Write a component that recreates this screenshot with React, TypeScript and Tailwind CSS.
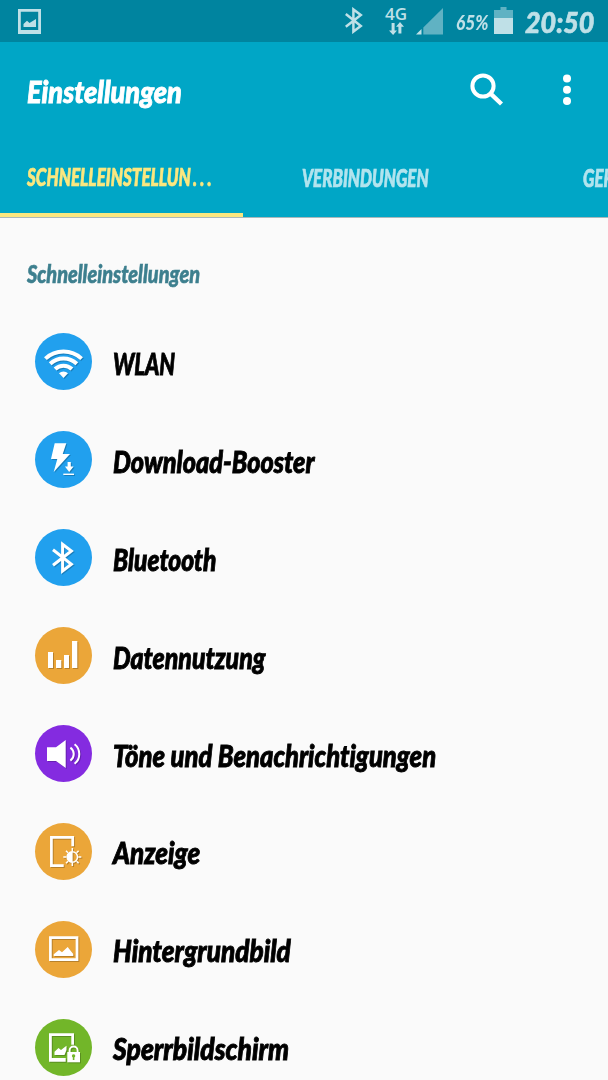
import type { ReactNode } from "react";

type SettingsItem = {
  label: string;
  color: string;
  stretch: string;
  icon: ReactNode;
};

const ITEMS: SettingsItem[] = [
  {
    label: "WLAN",
    color: "bg-[#21a0ee]",
    stretch: "scale-x-[0.73]",
    icon: (
      <>
        <g fill="none" stroke="currentColor" strokeWidth="4">
          <path d="M10.4 25.6A26.5 26.5 0 0 1 46.6 25.6" />
          <path d="M15.2 30.7A19.5 19.5 0 0 1 41.8 30.7" />
          <path d="M20.1 36A12.3 12.3 0 0 1 36.9 36" />
        </g>
        <path d="M28.5 45L24 40.2A6.5 6.5 0 0 1 33 40.2Z" />
      </>
    ),
  },
  {
    label: "Download-Booster",
    color: "bg-[#21a0ee]",
    stretch: "scale-x-[0.842]",
    icon: (
      <>
        <path d="M19.7 12.3H31.3L27.7 23H35L18.7 41L22.3 28H16Z" />
        <path d="M32.6 31H35.8V35.5H38.6L34.2 41L29.9 35.5H32.6Z" />
        <path d="M28.3 42.6H39V44H28.3Z" />
      </>
    ),
  },
  {
    label: "Bluetooth",
    color: "bg-[#21a0ee]",
    stretch: "scale-x-[0.82]",
    icon: (
      <path
        d="M18 20.8L36.4 35.2L27.6 42V15.2L36.4 22L18 36.2"
        fill="none"
        stroke="currentColor"
        strokeWidth="3"
      />
    ),
  },
  {
    label: "Datennutzung",
    color: "bg-[#eba639]",
    stretch: "scale-x-[0.83]",
    icon: <path d="M13 25H18V41H13ZM21 33H26.3V41H21ZM29 28H34V41H29ZM37 14H42.3V41H37Z" />,
  },
  {
    label: "Töne und Benachrichtigungen",
    color: "bg-[#842be0]",
    stretch: "scale-x-[0.853]",
    icon: (
      <>
        <path d="M12 22.3H21L30.7 15V43L21 36H12Z" />
        <g fill="none" stroke="currentColor" strokeWidth="2">
          <path d="M35.4 22.6A8 8 0 0 1 35.4 35.6" />
          <path d="M39.6 19.2A12.6 12.6 0 0 1 39.6 38.8" />
        </g>
      </>
    ),
  },
  {
    label: "Anzeige",
    color: "bg-[#eba639]",
    stretch: "scale-x-[0.865]",
    icon: (
      <>
        <path d="M37.7 23.3V14.4H16.4V42.6H28.7" fill="none" stroke="currentColor" strokeWidth="2.7" />
        <circle cx="37.3" cy="34" r="5.2" fill="none" stroke="currentColor" strokeWidth="1.5" />
        <path d="M37.6 28.5A5.5 5.5 0 0 0 37.6 39.5Z" />
        <path
          d="M37.3 25V28M37.3 40V43M28.3 34H31.3M43.3 34H46.3M31 27.7L33 29.7M41.6 38.3L43.6 40.3M31 40.3L33 38.3M41.6 29.7L43.6 27.7"
          stroke="currentColor"
          strokeWidth="1.5"
        />
      </>
    ),
  },
  {
    label: "Hintergrundbild",
    color: "bg-[#eba639]",
    stretch: "scale-x-[0.872]",
    icon: (
      <>
        <path d="M15.4 16.7H42V38.7H15.4Z" fill="none" stroke="currentColor" strokeWidth="2.7" />
        <path d="M18.7 35V33.3L24 29L27 31.3L32.7 26L38.3 33V35Z" />
      </>
    ),
  },
  {
    label: "Sperrbildschirm",
    color: "bg-[#72b629]",
    stretch: "scale-x-[0.882]",
    icon: (
      <>
        <path d="M14 14.3H39V25.7H36.3V17H16.8V39H30.7V42.7H14Z" />
        <path d="M19.5 36V32.7L23.5 29L26 31L31.5 26.7V31L29.5 36Z" />
        <path d="M34.6 33.5V31.5A4 4 0 0 1 42.6 31.5V33.5" fill="none" stroke="currentColor" strokeWidth="1.9" />
        <path d="M32.3 33H45V43.3H32.3Z" />
        <path d="M38.6 35.2A1.7 1.7 0 0 1 39.4 38.4V41H37.8V38.4A1.7 1.7 0 0 1 38.6 35.2Z" fill="#72b629" />
      </>
    ),
  },
];

function StatusBar() {
  return (
    <div className="flex h-[42px] shrink-0 items-start bg-[#00849f] text-[#bfe0e7]">
      <svg viewBox="0 0 23 25" className="mt-[9px] ml-[18px] h-[25px] w-[23px]" fill="currentColor">
        <path d="M1.4 1.4H21.6V22.6H1.4Z" fill="none" stroke="currentColor" strokeWidth="2.8" />
        <path d="M0 21H23V25H0Z" />
        <path d="M5.5 18V15L9 11.8L11.5 14L18 10V18Z" />
      </svg>

      <svg viewBox="0 0 18 27" className="mt-[7px] ml-auto h-[27px] w-[18px]" fill="none">
        <path d="M0.8 7L15.8 19L8.4 24.6V2.4L15.8 8L0.8 19.8" stroke="currentColor" strokeWidth="2.5" />
      </svg>

      <div className="mt-[5px] ml-[22px] flex w-[22px] flex-col items-center">
        <span className="font-['Open_Sans','Noto_Sans',sans-serif] text-[17px] leading-[18px] font-semibold not-italic">
          4G
        </span>
        <svg viewBox="0 0 15 13" className="-mt-px h-[13px] w-[15px]" fill="currentColor">
          <path d="M2.6 1H5.6V8.5H8L4.1 13L0 8.5H2.6Z" />
          <path d="M9.4 11.5H12.4V4.7H15L11 0L7 4.7H9.4Z" />
        </svg>
      </div>

      <svg viewBox="0 0 28 28" className="mt-[7px] ml-[9px] h-[28px] w-[28px]" fill="currentColor">
        <path d="M27 1V27.5H7.3V20.5Z" opacity="0.5" />
        <path d="M0 27.5L5.5 22V27.5Z" />
      </svg>

      <div className="mt-[11px] ml-[12px] w-[38px]">
        <span className="inline-block origin-left scale-x-[0.86] text-[20px] leading-[22px]">65%</span>
      </div>

      <svg viewBox="0 0 19 27" className="mt-[7px] h-[27px] w-[19px]" fill="currentColor">
        <path d="M6.5 0H12.5V3H19V11H0V3H6.5Z" opacity="0.5" />
        <path d="M0 11H19V27H0Z" />
      </svg>

      <div className="mt-[6px] mr-[13px] ml-[12px] w-[70px]">
        <span className="inline-block origin-left scale-x-[0.96] text-[28px] leading-[32px] [-webkit-text-stroke:0.6px]">
          20:50
        </span>
      </div>
    </div>
  );
}

export default function App() {
  return (
    <main className="flex h-[1080px] w-[608px] flex-col overflow-hidden bg-[#fafafa] font-['Lato',sans-serif] font-black whitespace-nowrap text-black italic [font-variant-ligatures:none]">
      <StatusBar />

      <header className="flex h-[176px] shrink-0 flex-col border-b border-[#a9b8bb] bg-[#00a6c6] text-white">
        <div className="flex h-[98px] items-center pl-[27px]">
          <h1 className="origin-left scale-x-[0.875] text-[31px] leading-[40px] [-webkit-text-stroke:0.9px]">
            Einstellungen
          </h1>
          <svg viewBox="0 0 34 34" className="-mt-[2px] ml-auto h-[34px] w-[34px]" fill="none">
            <circle cx="13" cy="13" r="10.6" stroke="currentColor" strokeWidth="4" />
            <path d="M20.3 20.3L31.5 31" stroke="currentColor" strokeWidth="4.4" />
          </svg>
          <svg viewBox="0 0 8 32" className="-mt-[2px] mr-[37px] ml-[59px] h-[32px] w-[8px]" fill="currentColor">
            <circle cx="4" cy="4.5" r="4" />
            <circle cx="4" cy="15.7" r="4" />
            <circle cx="4" cy="27" r="4" />
          </svg>
        </div>

        <nav className="flex h-[77px] text-[24px] leading-[76px] text-[#b2e4ee] [-webkit-text-stroke:0.7px]">
          <div className="w-[243px] border-b-4 border-[#fbe77f] pl-[27px] leading-[74px] text-[#fbe77f]">
            <span className="inline-block origin-left scale-x-[0.71]">
              SCHNELLEINSTELLUN<span className="ml-[3px] tracking-[4.5px]">...</span>
            </span>
          </div>
          <div className="w-[281px] pl-[59px]">
            <span className="inline-block origin-left scale-x-[0.705]">VERBINDUNGEN</span>
          </div>
          <div className="w-[84px] overflow-hidden pl-[59px]">
            <span className="inline-block origin-left scale-x-[0.705]">GERÄT</span>
          </div>
        </nav>
      </header>

      <h2 className="mt-[35px] mb-[20px] ml-[27px] h-[40px] w-[300px] shrink-0 origin-left scale-x-[0.795] text-[25px] leading-[40px] text-[#3d7f8e] [-webkit-text-stroke:0.6px]">
        Schnelleinstellungen
      </h2>

      <ul>
        {ITEMS.map((item) => (
          <li key={item.label} className="flex h-[97.9px] items-center gap-[21px] pl-[35px]">
            <span className={`h-[57px] w-[57px] shrink-0 rounded-full text-white ${item.color}`}>
              <svg
                viewBox="0 0 57 57"
                className="h-full w-full drop-shadow-[1px_1px_0_rgba(0,0,0,0.22)]"
                fill="currentColor"
              >
                {item.icon}
              </svg>
            </span>
            <span
              className={`origin-left pt-[2px] text-[30px] leading-[40px] [-webkit-text-stroke:0.9px] ${item.stretch}`}
            >
              {item.label}
            </span>
          </li>
        ))}
      </ul>
    </main>
  );
}
